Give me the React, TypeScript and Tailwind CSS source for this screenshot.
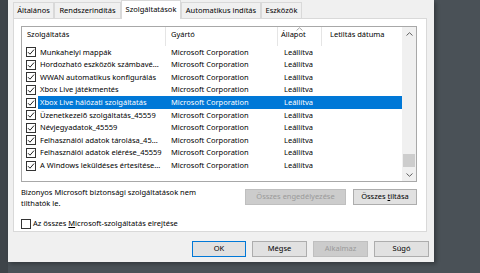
import React from "react"

const rows = [
  "Munkahelyi mappák",
  "Hordozható eszközök számbavé...",
  "WWAN automatikus konfigurálás",
  "Xbox Live játékmentés",
  "Xbox Live hálózati szolgáltatás",
  "Üzenetkezelő szolgáltatás_45559",
  "Névjegyadatok_45559",
  "Felhasználói adatok tárolása_45...",
  "Felhasználói adatok elérése_45559",
  "A Windows leküldéses értesítése...",
]

const tabs = [
  { label: "Általános", w: "w-[41px]" },
  { label: "Rendszerindítás", w: "w-[67px]" },
  { label: "Szolgáltatások", w: "w-[60px]", active: true },
  { label: "Automatikus indítás", w: "w-[80px]" },
  { label: "Eszközök", w: "w-[41px]" },
]

function Check({ checked = true }: { checked?: boolean }) {
  return (
    <div className="w-[10px] h-[10px] border border-[#333] bg-white flex items-center justify-center shrink-0">
      {checked && (
        <svg width="8" height="8" viewBox="0 0 8 8">
          <path d="M1 4.2 L3 6.2 L7 1.6" fill="none" stroke="#222" strokeWidth="1" />
        </svg>
      )}
    </div>
  )
}

function Btn({ children, w, disabled, focus }: { children: React.ReactNode; w: string; disabled?: boolean; focus?: boolean }) {
  return (
    <div
      className={`${w} h-[16px] flex items-center justify-center border ${
        disabled
          ? "bg-[#cccccc] border-[#bfbfbf] text-[#9a9a9a]"
          : focus
          ? "bg-[#e1e1e1] border-[#0078d7] text-black"
          : "bg-[#e1e1e1] border-[#adadad] text-black"
      }`}
    >
      {children}
    </div>
  )
}

export default function App() {
  return (
    <div className="w-[480px] h-[273px] bg-[#4a5157] flex overflow-hidden text-[7.5px] leading-none text-black [font-family:'Noto_Sans',sans-serif]">
      <div className="w-[8px] h-full bg-[#3e4449]" />
      <div className="w-[426px] h-[262px] bg-[#f0f0f0] flex flex-col shadow-[2px_2px_4px_rgba(0,0,0,0.3)]">
        {/* Tabs */}
        <div className="h-[18px] flex items-end pl-[5px]">
          {tabs.map((t) => (
            <div
              key={t.label}
              className={`${t.w} flex items-center justify-center border border-b-0 ${
                t.active
                  ? "h-[19px] bg-white border-[#d9d9d9] -mb-[1px] relative z-10"
                  : "h-[16px] bg-[#f0f0f0] border-[#d9d9d9]"
              }`}
            >
              {t.label}
            </div>
          ))}
        </div>

        {/* Panel */}
        <div className="ml-[5px] w-[414px] h-[214px] bg-white border border-[#d9d9d9] flex flex-col pl-[7px] pt-[7px]">
          <div className="w-[396px] h-[156px] border border-[#a8a8a8] flex">
            <div className="w-[380px] flex flex-col">
              {/* Header */}
              <div className="h-[19px] flex shrink-0">
                <div className="w-[144px] border-r border-[#e5e5e5] pl-[5px] pt-[4px]">Szolgáltatás</div>
                <div className="w-[112px] border-r border-[#e5e5e5] pl-[5px] pt-[4px]">Gyártó</div>
                <div className="w-[44px] border-r border-[#e5e5e5] pl-[3px] pt-[4px] relative">
                  Állapot
                  <svg className="absolute left-[18px] -top-[0px]" width="7" height="4" viewBox="0 0 7 4">
                    <path d="M0.5 3.5 L3.5 0.8 L6.5 3.5" fill="none" stroke="#8a8a8a" strokeWidth="0.8" />
                  </svg>
                </div>
                <div className="w-[80px] pl-[8px] pt-[4px]">Letiltás dátuma</div>
              </div>
              {/* Rows */}
              {rows.map((r, i) => {
                const sel = i === 4
                return (
                  <div key={r} className="h-[12.6px] flex items-center">
                    <div className="w-[16px] pl-[4px] flex items-center">
                      <Check />
                    </div>
                    <div className={`flex-1 h-full flex items-center ${sel ? "bg-[#0078d7] text-white" : ""}`}>
                      <div className="w-[128px] pl-[2px] whitespace-nowrap">{r}</div>
                      <div className="w-[112px] pl-[5px] whitespace-nowrap">Microsoft Corporation</div>
                      <div className="w-[44px] pl-[6px]">Leállítva</div>
                      <div className="w-[80px]" />
                    </div>
                  </div>
                )
              })}
            </div>
            {/* Scrollbar */}
            <div className="w-[14px] bg-[#f0f0f0] flex flex-col items-center">
              <div className="h-[14px] flex items-center justify-center">
                <svg width="7" height="4" viewBox="0 0 7 4">
                  <path d="M0.5 3.5 L3.5 0.7 L6.5 3.5" fill="none" stroke="#606060" strokeWidth="1" />
                </svg>
              </div>
              <div className="flex-1 w-full flex flex-col justify-end px-[1px] pb-[1px]">
                <div className="h-[13px] bg-[#cdcdcd]" />
              </div>
              <div className="h-[13px] flex items-center justify-center">
                <svg width="7" height="4" viewBox="0 0 7 4">
                  <path d="M0.5 0.5 L3.5 3.3 L6.5 0.5" fill="none" stroke="#606060" strokeWidth="1" />
                </svg>
              </div>
            </div>
          </div>

          <div className="w-[396px] mt-[5px] flex items-start justify-between">
            <div className="leading-[11px] w-[200px]">
              Bizonyos Microsoft biztonsági szolgáltatások nem
              <br />
              tilthatók le.
            </div>
            <div className="flex gap-[7px] mt-[2px]">
              <Btn w="w-[101px]" disabled>
                Összes engedélyezése
              </Btn>
              <Btn w="w-[64px]">
                <span>
                  Összes <span className="underline">t</span>iltása
                </span>
              </Btn>
            </div>
          </div>

          <div className="mt-[10px] flex items-center gap-[2px]">
            <Check checked={false} />
            <span>
              Az összes <span className="underline">M</span>icrosoft-szolgáltatás elrejtése
            </span>
          </div>
        </div>

        {/* Bottom buttons */}
        <div className="flex-1 flex items-start justify-end gap-[6px] pt-[9px] pr-[5px]">
          <Btn w="w-[54px]" focus>
            OK
          </Btn>
          <Btn w="w-[55px]">Mégse</Btn>
          <Btn w="w-[55px]" disabled>
            Alkalmaz
          </Btn>
          <Btn w="w-[55px]">Súgó</Btn>
        </div>
      </div>
    </div>
  )
}
